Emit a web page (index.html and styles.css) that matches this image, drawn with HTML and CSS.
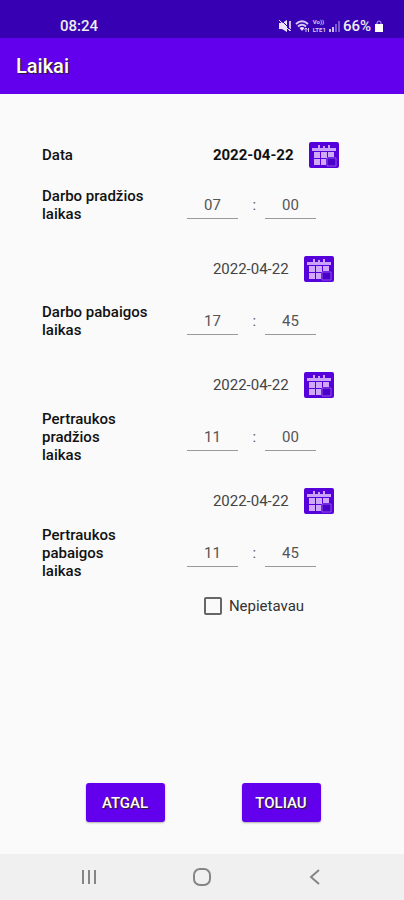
FILE: index.html
```html
<!DOCTYPE html>
<html lang="lt">
	<head>
		<meta charset="utf-8" />
		<meta name="viewport" content="width=device-width, initial-scale=1" />
		<title>Laikai</title>
		<link rel="stylesheet" href="styles.css">
	</head>
	<body>
		<svg class="defs" aria-hidden="true">
			<symbol id="calendar" viewBox="0 0 30 26">
				<path d="M3 6h24v3H3z" fill="#c9a4f8"/>
				<path d="M10 3v4M15 4v3M20 3v4" stroke="#c9a4f8" stroke-width="2"/>
				<path d="M5 10h6v6H5zM12 10h6v6h-6zM19 10h6v5h-6zM5 17h6v6H5zM12 17h5v6h-5z" fill="#cfa8fa"/>
				<path d="M18 16h9v8h-9z" fill="#4a00c8" stroke="#9050e8"/>
			</symbol>
		</svg>
		<div class="status">
			<span class="clock">08:24</span>
			<span class="signs">
				<svg width="14" height="14" viewBox="0 0 14 14" aria-hidden="true">
					<path d="M1 4h3l5-3v12L4 10H1z" fill="#e9e0fa"/>
					<path d="M12 2v10" stroke="#cdbcf2" stroke-width="2"/>
					<path d="M2 0l11 11" stroke="#3700b3" stroke-width="1"/>
					<path d="M1 1l11 11" stroke="#e9e0fa" stroke-width="1"/>
				</svg>
				<svg width="15" height="14" viewBox="0 0 15 14" aria-hidden="true">
					<path d="M1 5q6-5.500 12 0M3 7.500q4-3.500 8 0" fill="none" stroke="#d8caf5" stroke-width="2"/>
					<path d="M4.500 9q2.500-2 5 0L7 12z" fill="#e9e0fa"/>
					<path d="M11 13V9M9.500 10.500L11 9l1.500 1.500M13.500 9v4" fill="none" stroke="#d8caf5"/>
				</svg>
				<span class="lte"><b>Vo))</b><b>LTE1</b></span>
				<svg width="11" height="14" viewBox="0 0 11 14" aria-hidden="true">
					<path d="M0 10h2v3H0zM3 8h2v5H3z" fill="#cdbcf2"/>
					<path d="M6 5h2v8H6zM9 2h2v11H9z" fill="#7c55d0"/>
				</svg>
				<span class="percent">66%</span>
				<svg width="10" height="14" viewBox="0 0 10 14" aria-hidden="true">
					<path d="M3 6V4q0-2 2-2t2 2v2" fill="none" stroke="#b9a2ec" stroke-width="1"/>
					<path d="M1 5h8v8H1z" fill="#fff"/>
				</svg>
			</span>
		</div>
		<header class="appbar">
			<h1>Laikai</h1>
		</header>
		<form class="times">
			<div class="group first">
				<div class="row">
					<span class="label">Data</span>
					<div class="date">
						<span>2022-04-22</span>
						<button type="button" class="pick" aria-label="Data"><svg><use href="#calendar"/></svg></button>
					</div>
				</div>
				<div class="row time">
					<label class="label" for="start-h">Darbo pradžios<br>laikas</label>
					<div class="clockset">
						<input type="text" id="start-h" inputmode="numeric" value="07">
						<span>:</span>
						<input type="text" id="start-m" inputmode="numeric" value="00" aria-label="Minutės">
					</div>
				</div>
			</div>
			<div class="group">
				<div class="row">
					<div class="date">
						<span>2022-04-22</span>
						<button type="button" class="pick" aria-label="Data"><svg><use href="#calendar"/></svg></button>
					</div>
				</div>
				<div class="row time">
					<label class="label" for="end-h">Darbo pabaigos<br>laikas</label>
					<div class="clockset">
						<input type="text" id="end-h" inputmode="numeric" value="17">
						<span>:</span>
						<input type="text" id="end-m" inputmode="numeric" value="45" aria-label="Minutės">
					</div>
				</div>
			</div>
			<div class="group">
				<div class="row">
					<div class="date">
						<span>2022-04-22</span>
						<button type="button" class="pick" aria-label="Data"><svg><use href="#calendar"/></svg></button>
					</div>
				</div>
				<div class="row time">
					<label class="label" for="break-start-h">Pertraukos<br>pradžios<br>laikas</label>
					<div class="clockset">
						<input type="text" id="break-start-h" inputmode="numeric" value="11">
						<span>:</span>
						<input type="text" id="break-start-m" inputmode="numeric" value="00" aria-label="Minutės">
					</div>
				</div>
			</div>
			<div class="group">
				<div class="row">
					<div class="date">
						<span>2022-04-22</span>
						<button type="button" class="pick" aria-label="Data"><svg><use href="#calendar"/></svg></button>
					</div>
				</div>
				<div class="row time">
					<label class="label" for="break-end-h">Pertraukos<br>pabaigos<br>laikas</label>
					<div class="clockset">
						<input type="text" id="break-end-h" inputmode="numeric" value="11">
						<span>:</span>
						<input type="text" id="break-end-m" inputmode="numeric" value="45" aria-label="Minutės">
					</div>
				</div>
			</div>
			<div class="row">
				<label class="check"><input type="checkbox">Nepietavau</label>
			</div>
			<div class="actions">
				<button type="button">ATGAL</button>
				<button type="submit">TOLIAU</button>
			</div>
		</form>
		<nav class="navbar">
			<button type="button" aria-label="Naujausios">
				<svg width="18" height="18" viewBox="0 0 18 18"><path d="M3 2v14M9 2v14M15 2v14" stroke="#858585" stroke-width="2"/></svg>
			</button>
			<button type="button" aria-label="Pradžia">
				<svg width="18" height="18" viewBox="0 0 18 18"><rect x="1" y="1" width="16" height="16" rx="6" fill="none" stroke="#858585" stroke-width="2"/></svg>
			</button>
			<button type="button" aria-label="Atgal">
				<svg width="18" height="18" viewBox="0 0 18 18"><path d="M13 2L5 9l8 7" fill="none" stroke="#858585" stroke-width="2"/></svg>
			</button>
		</nav>
	</body>
</html>
```
FILE: styles.css
```css
*{
	box-sizing:border-box;
}
body,html,h1{
	padding:0;
	margin:0;
}
body{
	display:flex;
	flex-direction:column;
	min-height:100vh;
	background-color:#fafafa;
	font-family:Roboto, "Noto Sans", sans-serif;
	font-size:15px;
	line-height:18px;
	color:#111;
}
button,input{
	font:inherit;
	color:inherit;
	margin:0;
	padding:0;
	border:0;
	background:none;
}
.defs{
	display:none;
}

/* top bars */
.status{
	display:flex;
	justify-content:space-between;
	align-items:center;
	height:38px;
	padding:13px 20px 0 60px;
	background-color:#3700b3;
	color:#eee;
	font-size:15px;
	line-height:24px;
	font-weight:500;
}
.signs{
	display:flex;
	align-items:center;
	gap:3px;
}
.lte{
	font-size:6px;
	line-height:8px;
	color:#d8caf5;
}
.lte b{
	display:block;
}
.appbar{
	padding:16px;
	height:56px;
	background-color:#6200ee;
	color:#fff;
}
.appbar h1{
	font-size:20px;
	line-height:24px;
	font-weight:500;
	text-shadow:1px 1px 1px #222;
}

/* form */
.times{
	flex:1;
	display:flex;
	flex-direction:column;
	padding:43px 40px 32px 42px;
}
.group{
	margin-bottom:16px;
}
.row{
	display:grid;
	grid-template-columns:45% 1fr;
	align-items:center;
}
.label{
	font-weight:500;
}
.date{
	grid-column:2;
	display:flex;
	align-items:center;
	gap:15px;
	height:36px;
	padding-left:26px;
	color:#444;
}
.first .date{
	font-weight:700;
	color:#111;
}
.pick{
	width:30px;
	height:26px;
	border-radius:2px;
	background-color:#5600dc;
}
.pick svg{
	display:block;
	width:100%;
	height:100%;
}
.time{
	height:60px;
	margin-top:4px;
}
.first .time{
	margin-top:2px;
}
.clockset{
	display:flex;
	align-items:center;
	color:#555;
}
.clockset input{
	width:51px;
	height:28px;
	border-bottom:1px solid #999;
	text-align:center;
}
.clockset span{
	width:27px;
	padding-left:6px;
	text-align:center;
}
.check{
	grid-column:2;
	display:flex;
	align-items:center;
	gap:7px;
	height:14px;
	padding-left:17px;
	color:#333;
}
.check input{
	appearance:none;
	width:18px;
	height:18px;
	border:2px solid #666;
	border-radius:2px;
}
.check input:checked{
	background-color:#6200ee;
}
.actions{
	display:flex;
	justify-content:center;
	gap:77px;
	margin-top:auto;
}
.actions button{
	width:79px;
	height:39px;
	border-radius:3px;
	background-color:#6200ee;
	color:#fff;
	font-weight:500;
	text-shadow:1px 1px 1px #222;
	box-shadow:0 1px 2px rgba(0,0,0,.3);
}

/* system navigation */
.navbar{
	display:flex;
	justify-content:space-around;
	align-items:center;
	height:46px;
	padding:0 32px;
	background-color:#f0f0f0;
}
.navbar svg{
	display:block;
}
```
